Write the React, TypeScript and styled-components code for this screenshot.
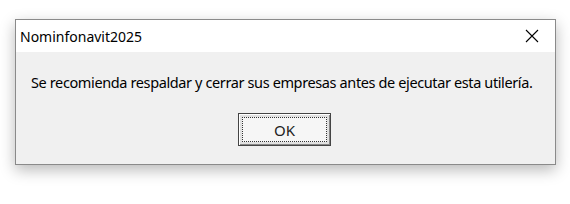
import React from "react";
import styled, { createGlobalStyle } from "styled-components";

const Global = createGlobalStyle`
  html, body { margin: 0; padding: 0; background: #ffffff; }
  body { font-family: "Noto Sans", "Open Sans", sans-serif; }
`;

const Page = styled.div`
  padding: 19px 0 0 15px;
  width: 570px;
  height: 204px;
  box-sizing: border-box;
`;

const Window = styled.div`
  width: 541px;
  height: 146px;
  box-sizing: border-box;
  border: 1px solid #8a8a8a;
  background: #f0f0f0;
  display: flex;
  flex-direction: column;
  box-shadow: 0 5px 14px rgba(0, 0, 0, 0.28);
`;

const TitleBar = styled.div`
  height: 32px;
  background: #ffffff;
  display: flex;
  align-items: center;
  justify-content: space-between;
  padding-left: 4px;
  flex-shrink: 0;
`;

const Title = styled.span`
  font-size: 14px;
  color: #000;
`;

const Close = styled.div`
  width: 46px;
  height: 32px;
  display: flex;
  align-items: center;
  justify-content: center;
`;

const Body = styled.div`
  flex: 1;
  display: flex;
  flex-direction: column;
  padding: 20px 0 0 15px;
`;

const Message = styled.div`
  font-size: 14.5px;
  letter-spacing: -0.38px;
  color: #000;
  line-height: 20px;
  white-space: nowrap;
`;

const ButtonRow = styled.div`
  display: flex;
  padding-left: 207px;
  margin-top: 21px;
`;

const OkButton = styled.button`
  width: 93px;
  height: 33px;
  box-sizing: border-box;
  background: #e1e1e1;
  border: 1px solid #444;
  box-shadow: inset 1px 1px 0 #fff, inset -1px -1px 0 #888;
  padding: 3px;
  display: flex;
  font-family: inherit;
`;

const Focus = styled.span`
  flex: 1;
  border: 1px dotted #333;
  display: flex;
  align-items: center;
  justify-content: center;
  font-size: 15px;
  color: #222;
  background: #f6f6f6;
`;

export default function App() {
  return (
    <>
      <Global />
      <Page>
        <Window>
          <TitleBar>
            <Title>Nominfonavit2025</Title>
            <Close>
              <svg width="14" height="14" viewBox="0 0 14 14">
                <path d="M1 1 L13 13 M13 1 L1 13" stroke="#000" strokeWidth="1.1" />
              </svg>
            </Close>
          </TitleBar>
          <Body>
            <Message>
              Se recomienda respaldar y cerrar sus empresas antes de ejecutar esta utilería.
            </Message>
            <ButtonRow>
              <OkButton>
                <Focus>OK</Focus>
              </OkButton>
            </ButtonRow>
          </Body>
        </Window>
      </Page>
    </>
  );
}
